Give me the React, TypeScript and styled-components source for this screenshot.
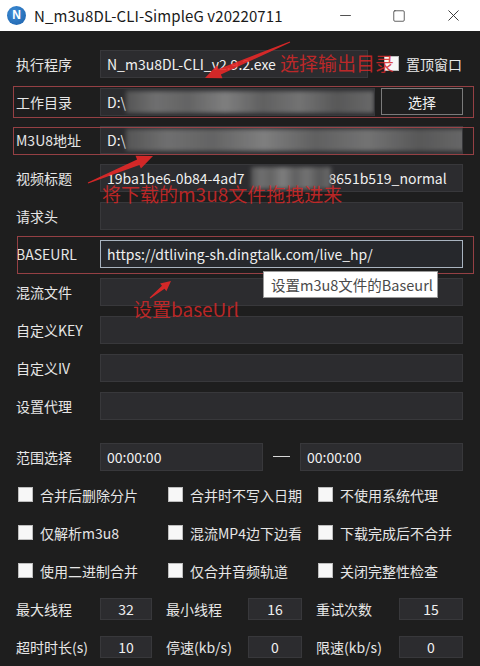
import React from "react";
import styled, { createGlobalStyle } from "styled-components";
import { Minus, Square, X } from "lucide-react";

const Global = createGlobalStyle`
  html, body { margin: 0; padding: 0; background: #1e1e1e; }
  * { box-sizing: border-box; }
`;

const FONT = `"Noto Sans CJK SC", "Noto Sans", "Liberation Sans", sans-serif`;

const Window = styled.div`
  position: relative;
  width: 480px;
  height: 666px;
  overflow: hidden;
  background: #1e1e1e;
  font-family: ${FONT};
  color: #e8e8e8;
`;

const TitleBar = styled.div`
  height: 31px;
  background: #ffffff;
  display: flex;
  align-items: center;
  padding-left: 7px;
`;

const AppIcon = styled.div`
  width: 19px;
  height: 19px;
  border-radius: 50%;
  background: radial-gradient(circle at 40% 35%, #3f8fd8, #1a5ea8);
  color: #fff;
  font-weight: 700;
  font-size: 12px;
  line-height: 19px;
  text-align: center;
  font-family: "Liberation Sans", sans-serif;
`;

const TitleText = styled.div`
  margin-left: 8px;
  font-size: 15px;
  color: #1a1a1a;
  flex: 1;
  letter-spacing: 0.1px;
`;

const WinBtn = styled.div`
  width: 54px;
  height: 31px;
  display: flex;
  align-items: center;
  justify-content: center;
  color: #333;
`;

const Body = styled.div`
  padding: 13.5px 17px 0 16px;
  display: flex;
  flex-direction: column;
`;

const Row = styled.div<{ $extraTop?: number }>`
  height: 38px;
  display: flex;
  align-items: center;
  margin-top: ${(p) => p.$extraTop ?? 0}px;
`;

const Label = styled.div<{ $w?: number }>`
  width: ${(p) => p.$w ?? 84}px;
  flex: none;
  font-size: 14px;
  color: #e6e6e6;
  white-space: nowrap;
`;

const Field = styled.div<{ $focus?: boolean; $h?: number; $center?: boolean; $w?: number }>`
  position: relative;
  height: ${(p) => p.$h ?? 28}px;
  ${(p) => (p.$w ? `width: ${p.$w}px; flex: none;` : "flex: 1;")}
  background: ${(p) => (p.$focus ? "#26282c" : "#2c2c2f")};
  border: 1px solid ${(p) => (p.$focus ? "#a9b4c0" : "#38383b")};
  display: flex;
  align-items: center;
  justify-content: ${(p) => (p.$center ? "center" : "flex-start")};
  padding: ${(p) => (p.$center ? "0" : "0 6px")};
  font-size: 14px;
  color: #f0f0f0;
  white-space: nowrap;
  overflow: hidden;
`;

const Blur = styled.div<{ $left: number; $width: number }>`
  position: absolute;
  left: ${(p) => p.$left}px;
  width: ${(p) => p.$width}px;
  top: 2px;
  bottom: 2px;
  background: linear-gradient(90deg, #5a5a5a 0%, #777 12%, #6a6a6a 25%, #888 40%, #666 55%, #7b7b7b 70%, #5d5d5d 85%, #707070 100%);
  filter: blur(2px);
  opacity: 0.9;
`;

const Button = styled.div`
  width: 82px;
  height: 27px;
  margin-left: 6px;
  flex: none;
  border: 1px solid #7b7b7b;
  background: #1f1f1f;
  display: flex;
  align-items: center;
  justify-content: center;
  font-size: 14px;
  color: #f0f0f0;
`;

const TopCheck = styled.div`
  display: flex;
  align-items: center;
  margin-left: 16px;
  gap: 7px;
  font-size: 14px;
`;

const Box = styled.div`
  width: 15px;
  height: 15px;
  background: #f7f7f7;
  border: 1px solid #bdbdbd;
  flex: none;
`;

const Dash = styled.div`
  width: 37px;
  display: flex;
  justify-content: center;
  &::before {
    content: "";
    width: 17px;
    height: 1px;
    background: #d8d8d8;
  }
`;

const Grid3 = styled.div`
  height: 38px;
  display: grid;
  grid-template-columns: 150px 150px 1fr;
  align-items: center;
`;

const CheckItem = styled.div`
  display: flex;
  align-items: center;
  gap: 7px;
  padding-left: 2px;
  font-size: 14px;
  color: #e6e6e6;
  white-space: nowrap;
`;

const NumGroup = styled.div`
  display: flex;
  align-items: center;
`;

const RedBox = styled.div<{ $l: number; $t: number; $w: number; $h: number }>`
  position: absolute;
  left: ${(p) => p.$l}px;
  top: ${(p) => p.$t}px;
  width: ${(p) => p.$w}px;
  height: ${(p) => p.$h}px;
  border: 1.5px solid rgba(170, 70, 75, 0.85);
  pointer-events: none;
`;

const RedText = styled.div<{ $l: number; $t: number; $s: number }>`
  position: absolute;
  left: ${(p) => p.$l}px;
  top: ${(p) => p.$t}px;
  font-size: ${(p) => p.$s}px;
  line-height: 1;
  color: rgba(214, 40, 40, 0.85);
  white-space: nowrap;
  pointer-events: none;
`;

const Tooltip = styled.div`
  position: absolute;
  left: 263px;
  top: 271px;
  width: 175px;
  height: 27px;
  background: #ffffff;
  border: 1px solid #9a9a9a;
  color: #4a4a4a;
  font-size: 14.5px;
  display: flex;
  align-items: center;
  padding-left: 7px;
  white-space: nowrap;
`;

const Overlay = styled.svg`
  position: absolute;
  left: 0;
  top: 0;
  pointer-events: none;
`;

function arrow(x1: number, y1: number, x2: number, y2: number, tail: number, shaft: number, headW: number, headL: number) {
  const dx = x2 - x1, dy = y2 - y1;
  const len = Math.hypot(dx, dy);
  const ux = dx / len, uy = dy / len;
  const nx = -uy, ny = ux;
  const bx = x2 - ux * headL, by = y2 - uy * headL;
  const pts = [
    [x1 + nx * tail, y1 + ny * tail],
    [bx + nx * shaft, by + ny * shaft],
    [bx + nx * headW, by + ny * headW],
    [x2, y2],
    [bx - nx * headW, by - ny * headW],
    [bx - nx * shaft, by - ny * shaft],
    [x1 - nx * tail, y1 - ny * tail],
  ];
  return pts.map((p) => p.map((v) => v.toFixed(1)).join(",")).join(" ");
}

export default function App() {
  return (
    <Window>
      <Global />
      <TitleBar>
        <AppIcon>N</AppIcon>
        <TitleText>N_m3u8DL-CLI-SimpleG v20220711</TitleText>
        <WinBtn><Minus size={17} strokeWidth={1.2} /></WinBtn>
        <WinBtn><Square size={14} strokeWidth={1.3} /></WinBtn>
        <WinBtn><X size={19} strokeWidth={1.2} /></WinBtn>
      </TitleBar>
      <Body>
        <Row>
          <Label>执行程序</Label>
          <Field $w={268}>N_m3u8DL-CLI_v2.9.2.exe</Field>
          <TopCheck><Box />置顶窗口</TopCheck>
        </Row>
        <Row>
          <Label>工作目录</Label>
          <Field>D:\<Blur $left={25} $width={248} /></Field>
          <Button>选择</Button>
        </Row>
        <Row>
          <Label>M3U8地址</Label>
          <Field>D:\<Blur $left={25} $width={345} /></Field>
        </Row>
        <Row>
          <Label>视频标题</Label>
          <Field>
            19ba1be6-0b84-4ad7
            <Blur $left={150} $width={80} />
            <span style={{ marginLeft: 84 }}>8651b519_normal</span>
          </Field>
        </Row>
        <Row>
          <Label>请求头</Label>
          <Field />
        </Row>
        <Row>
          <Label>BASEURL</Label>
          <Field $focus>https://dtliving-sh.dingtalk.com/live_hp/</Field>
        </Row>
        <Row>
          <Label>混流文件</Label>
          <Field />
        </Row>
        <Row>
          <Label>自定义KEY</Label>
          <Field />
        </Row>
        <Row>
          <Label>自定义IV</Label>
          <Field />
        </Row>
        <Row>
          <Label>设置代理</Label>
          <Field />
        </Row>
        <Row $extraTop={13}>
          <Label>范围选择</Label>
          <Field>00:00:00</Field>
          <Dash />
          <Field>00:00:00</Field>
        </Row>
        <Grid3>
          <CheckItem><Box />合并后删除分片</CheckItem>
          <CheckItem><Box />合并时不写入日期</CheckItem>
          <CheckItem><Box />不使用系统代理</CheckItem>
        </Grid3>
        <Grid3>
          <CheckItem><Box />仅解析m3u8</CheckItem>
          <CheckItem><Box />混流MP4边下边看</CheckItem>
          <CheckItem><Box />下载完成后不合并</CheckItem>
        </Grid3>
        <Grid3>
          <CheckItem><Box />使用二进制合并</CheckItem>
          <CheckItem><Box />仅合并音频轨道</CheckItem>
          <CheckItem><Box />关闭完整性检查</CheckItem>
        </Grid3>
        <Grid3>
          <NumGroup><Label $w={84}>最大线程</Label><Field $w={52} $h={22} $center>32</Field></NumGroup>
          <NumGroup><Label $w={82}>最小线程</Label><Field $w={54} $h={22} $center>16</Field></NumGroup>
          <NumGroup><Label $w={83}>重试次数</Label><Field $w={64} $h={22} $center>15</Field></NumGroup>
        </Grid3>
        <Grid3>
          <NumGroup><Label $w={84}>超时时长(s)</Label><Field $w={52} $h={22} $center>10</Field></NumGroup>
          <NumGroup><Label $w={82}>停速(kb/s)</Label><Field $w={54} $h={22} $center>0</Field></NumGroup>
          <NumGroup><Label $w={83}>限速(kb/s)</Label><Field $w={64} $h={22} $center>0</Field></NumGroup>
        </Grid3>
      </Body>

      <RedBox $l={13} $t={86} $w={461} $h={32} />
      <RedBox $l={13} $t={127} $w={461} $h={28} />
      <RedBox $l={17} $t={236} $w={457} $h={38} />

      <RedText $l={280} $t={53} $s={19}>选择输出目录</RedText>
      <RedText $l={102} $t={184} $s={19}>将下载的m3u8文件拖拽进来</RedText>
      <RedText $l={133} $t={299} $s={19}>设置baseUrl</RedText>

      <Tooltip>设置m3u8文件的Baseurl</Tooltip>

      <Overlay width={480} height={666} viewBox="0 0 480 666">
        <polygon points={arrow(290, 42, 205, 78, 0.6, 3, 7, 16)} fill="rgba(230,40,40,0.9)" />
        <polygon points={arrow(88, 183, 153, 156, 0.6, 3, 7, 16)} fill="rgba(230,40,40,0.9)" />
        <polygon points={arrow(150, 298, 171, 281, 0.5, 2, 5, 10)} fill="rgba(230,40,40,0.9)" />
      </Overlay>
    </Window>
  );
}
